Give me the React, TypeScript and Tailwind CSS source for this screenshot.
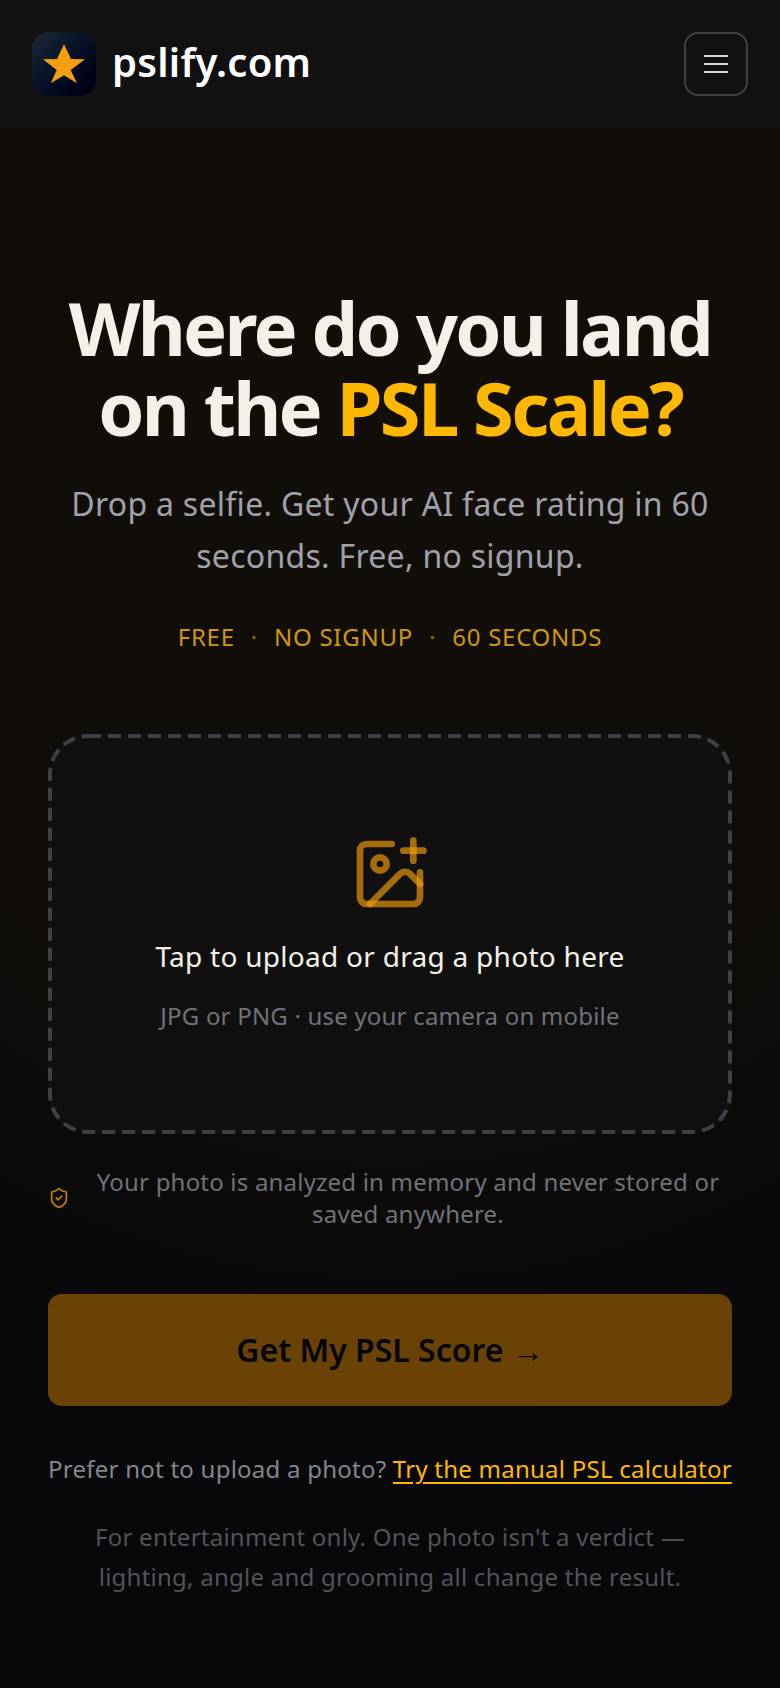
import { ShieldCheck } from "lucide-react";

export default function App() {
  return (
    <div className="min-h-[1688px] w-full bg-[#08080b] bg-[radial-gradient(ellipse_120%_55%_at_50%_30%,#120e0a_0%,#100d09_55%,#08080b_100%)] font-['Noto_Sans',sans-serif]">
      {/* header */}
      <header className="flex h-[128px] items-center justify-between bg-[#111111] px-8">
        <div className="flex items-center gap-4">
          <div className="flex h-16 w-16 items-center justify-center rounded-2xl bg-gradient-to-br from-[#1e293b] to-[#00000f]">
            <svg viewBox="0 0 64 64" className="h-16 w-16">
              <polygon points="32,12.3 39,27 53,27.3 38.7,38 45,51.3 32,43.3 18.7,51.3 24.7,38 11,27.3 25,27" fill="#f59e0b" />
            </svg>
          </div>
          <span className="-mt-1 text-[40px] leading-none font-semibold tracking-[0.25px] text-white">pslify.com</span>
        </div>
        <button className="flex h-16 w-16 items-center justify-center rounded-[14px] border-2 border-[#3f3f46]">
          <svg viewBox="0 0 24 24" className="h-6 w-6" stroke="#d4d4d8" strokeWidth="2">
            <path d="M0 4h24M0 12h24M0 20h24" />
          </svg>
        </button>
      </header>

      <main className="flex flex-col items-center px-12 pt-[160px]">
        <h1 className="text-center text-[74px] leading-[80px] font-bold tracking-[-2.7px] text-[#f3f0e8]">
          Where do you land
          <br />
          on the <span className="text-[#ffb800]">PSL Scale?</span>
        </h1>
        <p className="mt-[30px] text-center text-[32px] leading-[52px] tracking-[0.28px] text-[#a1a1aa]">
          Drop a selfie. Get your AI face rating in 60 seconds. Free, no signup.
        </p>
        <div className="mt-[37px] flex items-center gap-4 text-[24px] leading-9 tracking-[0.75px] text-[#cf970e]">
          <span>FREE</span>
          <span className="text-[#8a6a10]">·</span>
          <span>NO SIGNUP</span>
          <span className="text-[#8a6a10]">·</span>
          <span>60 SECONDS</span>
        </div>

        {/* upload */}
        <div className="relative mt-[79px] flex h-[400px] w-full flex-col items-center rounded-[40px] bg-[#101011] pt-[100px]">
          <svg viewBox="0 0 684 400" className="pointer-events-none absolute inset-0 h-full w-full" fill="none">
            <rect x="2" y="2" width="680" height="396" rx="38" stroke="#3f3f46" strokeWidth="4" strokeDasharray="13 7" />
          </svg>
          <svg
            viewBox="0 0 24 24"
            className="h-20 w-20"
            fill="none"
            stroke="#f59e0b"
            strokeWidth="2"
            strokeLinecap="round"
            strokeLinejoin="round"
            strokeOpacity="0.65"
          >
            <path d="M16 5h6" />
            <path d="M19 2v6" />
            <path d="M21 11.5V19a2 2 0 0 1-2 2H5a2 2 0 0 1-2-2V5a2 2 0 0 1 2-2h7.5" />
            <path d="m21 15-3.086-3.086a2 2 0 0 0-2.828 0L6 21" />
            <circle cx="9" cy="9" r="2" />
          </svg>
          <p className="mt-5 text-[28px] leading-[44px] tracking-[0.28px] text-[#f5f1e8]">
            Tap to upload or drag a photo here
          </p>
          <p className="mt-[19px] text-[24px] leading-[38px] tracking-[0.2px] text-[#71717a]">
            JPG or PNG · use your camera on mobile
          </p>
        </div>

        <div className="mt-8 flex w-full items-center gap-[14px]">
          <ShieldCheck size={22} strokeWidth={2} className="shrink-0 text-[#b97a0c]" />
          <p className="flex-1 text-center text-[24px] leading-[32px] tracking-[0.2px] text-[#71717a]">
            Your photo is analyzed in memory and never stored or saved anywhere.
          </p>
        </div>

        <button className="mt-16 h-[112px] w-full rounded-[14px] bg-[#6a4205] text-[32px] font-semibold text-[#050505]">
          Get My PSL Score →
        </button>

        <p className="mt-[43px] text-[24px] leading-[40px] tracking-[0.24px] whitespace-nowrap text-[#85858e]">
          Prefer not to upload a photo?{" "}
          <a className="text-[#ffb800] underline underline-offset-4">Try the manual PSL calculator</a>
        </p>
        <p className="mt-[28px] text-center text-[24px] leading-[40px] tracking-[0.24px] text-[#52525b]">
          For entertainment only. One photo isn't a verdict — lighting, angle and grooming all
          change the result.
        </p>
      </main>
    </div>
  );
}
